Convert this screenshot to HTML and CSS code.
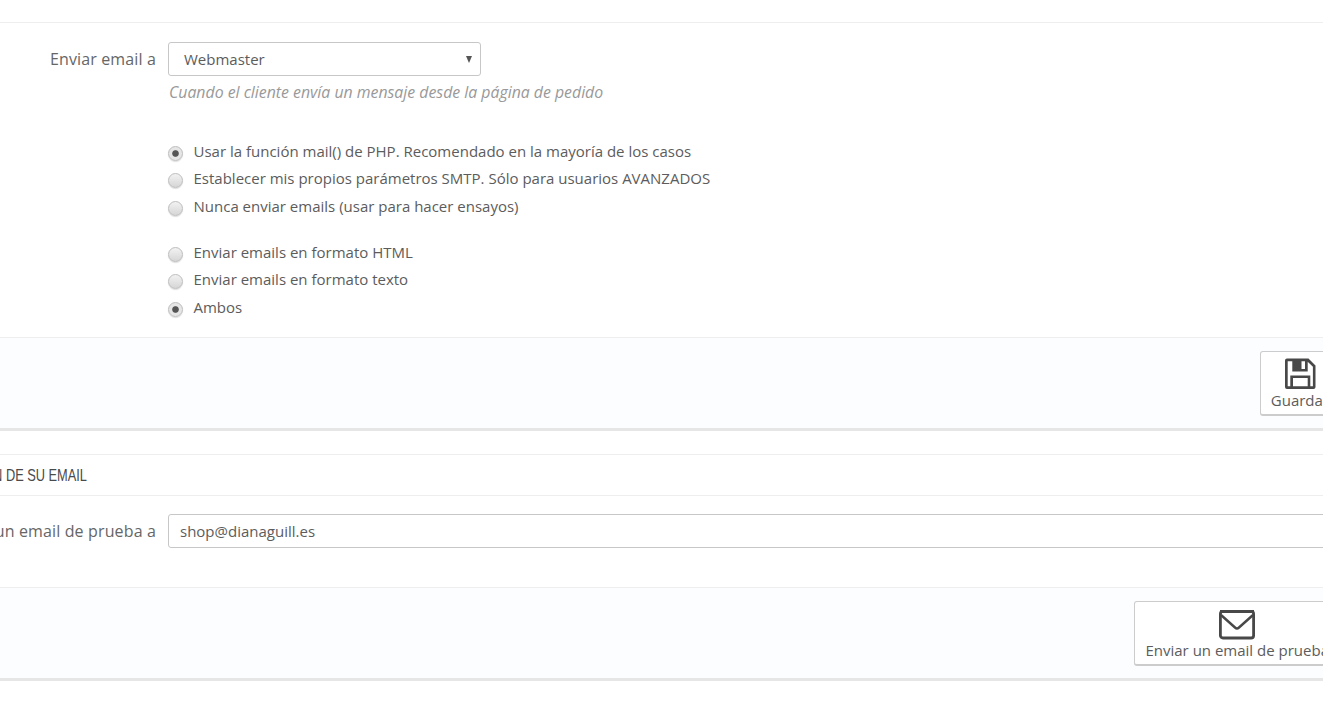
FILE: index.html
```html
<!DOCTYPE html>
<html lang="es">
<head>
<meta charset="utf-8">
<title>Email</title>
<link rel="stylesheet" href="styles.css">
</head>
<body>
<div class="page">
  <section class="panel panel-first">
    <div class="form-body form-body-first">
      <div class="row">
        <label class="row-label">Enviar email a</label>
        <div class="row-field">
          <div class="select"><span>Webmaster</span><i class="caret"></i></div>
          <p class="help">Cuando el cliente envía un mensaje desde la página de pedido</p>
        </div>
      </div>
      <div class="radios radios-a">
        <label class="radio"><span class="dot on"></span>Usar la función mail() de PHP. Recomendado en la mayoría de los casos</label>
        <label class="radio"><span class="dot"></span>Establecer mis propios parámetros SMTP. Sólo para usuarios AVANZADOS</label>
        <label class="radio"><span class="dot"></span>Nunca enviar emails (usar para hacer ensayos)</label>
      </div>
      <div class="radios radios-b">
        <label class="radio"><span class="dot"></span>Enviar emails en formato HTML</label>
        <label class="radio"><span class="dot"></span>Enviar emails en formato texto</label>
        <label class="radio"><span class="dot on"></span>Ambos</label>
      </div>
    </div>
    <div class="panel-footer">
      <button class="action" type="button">
        <svg class="ico" width="32" height="36" viewBox="0 -2 32 36"><path fill="#484848" fill-rule="evenodd" d="M3 1.500h21.500L31.500 8.500V30a2 2 0 0 1-2 2H3a2 2 0 0 1-2-2V3.500a2 2 0 0 1 2-2zM3.700 4.200V29.300h2.600V18.500h20V29.300h2.600V9.700L23.700 4.800v9.700H8.300V4.200zM9 21v8.300h14.700V21zM17.500 4.200v7.800h3.500V4.200z"/></svg>
        <span>Guardar</span>
      </button>
    </div>
  </section>
  <section class="panel">
    <h3 class="panel-heading"><span class="heading-text">PRUEBE LA CONFIGURACIÓN DE SU EMAIL</span></h3>
    <div class="form-body form-body-second">
      <div class="row">
        <label class="row-label">Enviar un email de prueba a</label>
        <div class="row-field">
          <div class="text-input">shop@dianaguill.es</div>
        </div>
      </div>
    </div>
    <div class="panel-footer">
      <button class="action" type="button">
        <svg class="ico" width="36" height="36" viewBox="0 0 36 36"><rect x="1.400" y="6.400" width="33.200" height="26.600" rx="2.500" fill="none" stroke="#484848" stroke-width="2.800"/><path fill="#484848" d="M1 5h34v3h-34z"/><path fill="none" stroke="#484848" stroke-width="2.400" d="M2 10L16 22.500a3 3 0 0 0 4 0L34 10"/></svg>
        <span>Enviar un email de prueba</span>
      </button>
    </div>
  </section>
</div>
</body>
</html>
```
FILE: styles.css
```css
html, body {
  margin: 0;
  height: 702px;
  overflow: hidden;
  background: #fff;
}
body {
  font-family: "Open Sans", "Liberation Sans", sans-serif;
  font-size: 15px;
  color: #5c5c5c;
}
.page {
  width: 1600px;
  margin-left: -100px;
}
.panel {
  width: 1455px;
  border-bottom: 3px solid #e6e6e6;
  margin-bottom: 23px;
}
.panel-first {
  padding-top: 22px;
}
.form-body {
  border-top: 1px solid #eee;
}
.form-body-first {
  padding: 19px 0 17px;
}
.form-body-second {
  padding: 18px 0 39px;
}
.row {
  display: flex;
  align-items: flex-start;
}
.row-label {
  width: 256px;
  box-sizing: border-box;
  text-align: right;
  font-size: 16px;
  letter-spacing: .14px;
  line-height: 34px;
  color: #666;
  white-space: nowrap;
  flex: none;
}
.row-field {
  margin-left: 12px;
  flex: 1;
}
.select {
  width: 313px;
  height: 34px;
  box-sizing: border-box;
  border: 1px solid #c7c7c7;
  border-radius: 3px;
  padding-left: 15px;
  line-height: 32px;
  display: flex;
  justify-content: space-between;
  align-items: center;
}
.caret {
  width: 0;
  height: 0;
  margin-right: 8px;
  border-left: 3.500px solid transparent;
  border-right: 3.500px solid transparent;
  border-top: 7px solid #555;
}
.help {
  margin: 6px 0 0 1px;
  font-size: 15.830px;
  line-height: 20px;
  font-style: italic;
  color: #999;
}
.radios {
  margin-left: 268px;
  display: flex;
  flex-direction: column;
}
.radios-a {
  margin-top: 35px;
}
.radios-b {
  margin-top: 19px;
}
.radio {
  display: flex;
  align-items: center;
  height: 27px;
  white-space: nowrap;
}
.radio:nth-child(2) {
  margin-bottom: 1px;
}
.dot {
  position: relative;
  top: 3px;
  width: 15px;
  height: 15px;
  box-sizing: border-box;
  margin-right: 10.500px;
  border: 1px solid #bdbdbd;
  border-radius: 50%;
  background: linear-gradient(#f2f2f2, #d6d6d6);
  box-shadow: 0 1px 1px #ddd;
  flex: none;
}
.dot.on {
  background: radial-gradient(circle, #555 0 2.800px, #e6e6e6 3.800px);
}
.panel-footer {
  height: 91px;
  box-sizing: border-box;
  border-top: 1px solid #eee;
  background: #fcfdfe;
  padding: 13px 14px 0 0;
  display: flex;
  justify-content: flex-end;
  align-items: flex-start;
}
.action {
  height: 65px;
  box-sizing: border-box;
  padding: 3px 11px 0 10px;
  border: 1px solid #ccc;
  border-bottom: 2px solid #ccc;
  border-radius: 3px;
  background: #fff;
  color: #5c5c5c;
  font: 15px/20px "Open Sans", sans-serif;
  display: flex;
  flex-direction: column;
  align-items: center;
}
.ico {
  display: block;
  margin-bottom: -1px;
}
.panel-heading {
  margin: 0;
  height: 41px;
  box-sizing: border-box;
  border-top: 1px solid #eee;
  font: 400 17px/41px "Liberation Sans", sans-serif;
  color: #4a4a4a;
  white-space: nowrap;
}
.heading-text {
  display: flex;
  justify-content: flex-end;
  width: 187px;
  transform: scaleX(.753);
  transform-origin: right center;
}
.text-input {
  height: 34px;
  box-sizing: border-box;
  border: 1px solid #c7c7c7;
  border-radius: 3px;
  padding-left: 11px;
  line-height: 32px;
}
```
